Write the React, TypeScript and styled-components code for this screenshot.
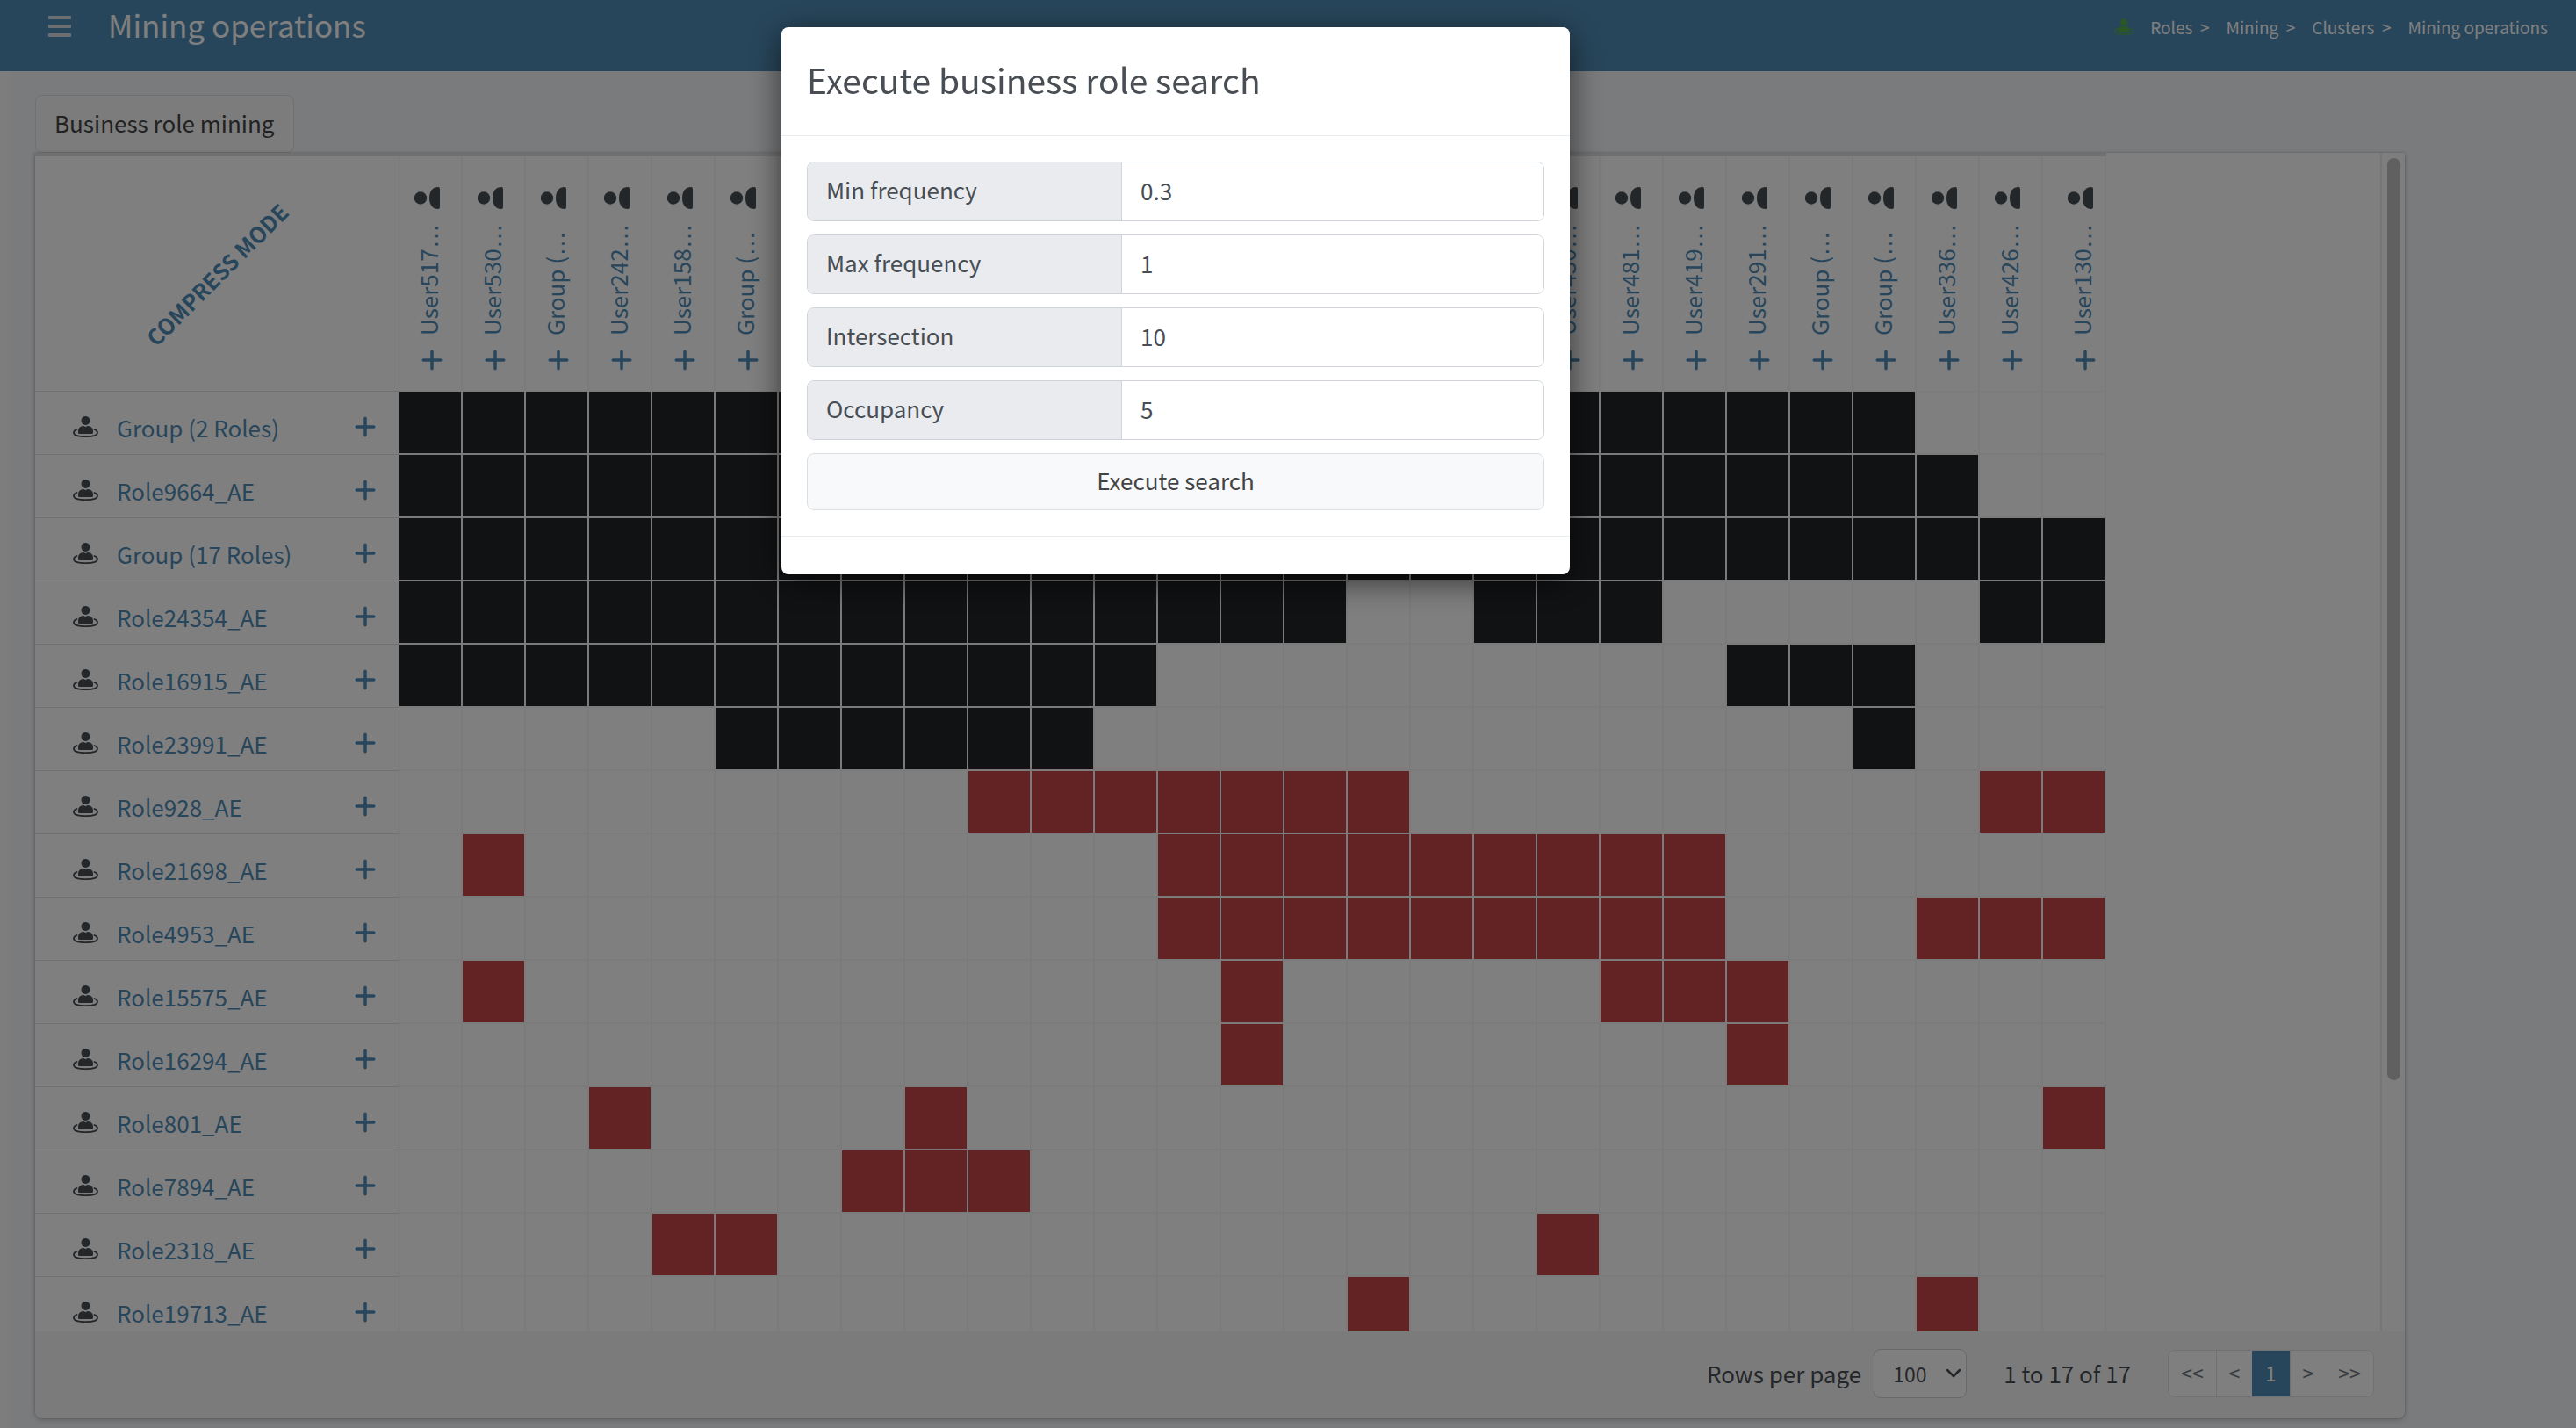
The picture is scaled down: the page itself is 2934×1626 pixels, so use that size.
import React from "react";
import styled, { createGlobalStyle } from "styled-components";

const Global = createGlobalStyle`
  * { box-sizing: border-box; }
  html, body { margin: 0; padding: 0; background: #f4f6f9; }
  body { min-height: 100vh; overflow: hidden; font-family: "Noto Sans CJK JP", "Noto Sans", sans-serif; font-size: 26px; line-height: 40px; color: #484e54; }
  button, input, select { font: inherit; color: inherit; margin: 0; }
  button { cursor: pointer; }
  a { color: inherit; text-decoration: none; }
`;

const Page = styled.div`
  min-height: 100vh;
  display: flex;
  flex-direction: column;
`;

const Header = styled.header`
  height: 81px;
  padding: 0 32px 0 55px;
  display: flex;
  align-items: flex-start;
  background: #508cb6;
  color: #fff;
`;

const MenuButton = styled.button`
  height: 60px;
  width: 26px;
  padding: 0;
  border: 0;
  background: none;
  display: flex;
  flex-direction: column;
  justify-content: center;
  gap: 6px;
`;

const MenuBar = styled.span`
  height: 4px;
  border-radius: 1px;
  background: #d8dee4;
`;

const PageTitle = styled.h1`
  margin: 0 auto 0 42px;
  font-size: 35px;
  line-height: 56px;
  font-weight: 400;
`;

const Crumbs = styled.nav`
  display: flex;
  align-items: center;
  height: 62px;
  font-size: 19px;
  gap: 19px;
`;

const Body = styled.div`
  flex: 1;
  display: flex;
`;

const Sidebar = styled.aside`
  width: 12px;
  background: #fafafa;
`;

const Main = styled.main`
  flex: 1;
  min-width: 0;
  padding: 27px 195px 10px 28px;
  display: flex;
  flex-direction: column;
  align-items: stretch;
`;

const Tab = styled.button`
  align-self: flex-start;
  height: 66px;
  padding: 0 21px 2px;
  border: 1px solid #e0e0e0;
  border-radius: 8px;
  background: #f8f9fa;
  color: #444;
`;

const Card = styled.section`
  border-radius: 0 0 8px 8px;
  background: #fff;
  box-shadow: 0 0 2px rgba(0, 0, 0, 0.25), 0 2px 6px rgba(0, 0, 0, 0.2);
  display: flex;
  flex-direction: column;
  overflow: hidden;
`;

const Viewport = styled.div`
  display: flex;
  height: 1342px;
  overflow: hidden;
`;

const TableArea = styled.div`
  flex: 1;
  min-width: 0;
  overflow: hidden;
`;

const Matrix = styled.table`
  border-collapse: separate;
  border-spacing: 0;
  table-layout: fixed;
  width: 2359px;
  border-top: 4px solid #e1e1e1;
`;

const FirstCol = styled.col`
  width: 415px;
`;

const Col = styled.col`
  width: 72px;
`;

const Corner = styled.th`
  height: 268px;
  padding: 0;
  border-bottom: 1px solid #e0e0e0;
  border-right: 1px solid #f4f4f4;
`;

const CompressButton = styled.button`
  border: 0;
  padding: 0;
  background: none;
  color: #508cb6;
  font-size: 25px;
  font-weight: 700;
  white-space: nowrap;
  transform: rotate(-45deg);
`;

const ColHead = styled.th`
  height: 268px;
  padding: 0;
  vertical-align: top;
  text-align: left;
  font-weight: 400;
  border-right: 2px solid #f6f6f6;
  border-bottom: 1px solid #f6f6f6;
`;

const ColStack = styled.div<{ $last?: boolean }>`
  height: 264px;
  padding-top: 35px;
  padding-left: ${(p) => (p.$last ? 28 : 17)}px;
  display: flex;
  flex-direction: column;
  align-items: flex-start;
`;

const ColIcon = styled.svg`
  width: 30px;
  height: 25px;
  flex: none;
`;

const ColLabel = styled.a`
  height: 144px;
  width: 32px;
  line-height: 32px;
  writing-mode: vertical-rl;
  text-orientation: sideways;
  transform: rotate(180deg);
  color: #508cb6;
  white-space: nowrap;
`;

const Dots = styled.span`
  font-family: "Liberation Sans", Arial, sans-serif;
  font-size: 29px;
`;

const PlusButton = styled.button`
  border: 0;
  padding: 0;
  background: none;
  width: 24px;
  height: 24px;
  display: flex;
`;

const ColPlus = styled(PlusButton)`
  margin: 16px 0 0 8px;
`;

const RowHead = styled.th`
  height: 72px;
  padding: 0 26px 0 43px;
  font-weight: 400;
  text-align: left;
  border-bottom: 1px solid #e0e0e0;
  border-right: 1px solid #f4f4f4;
`;

const RowInner = styled.div`
  padding-top: 9px;
  display: flex;
  align-items: center;
  gap: 21px;
`;

const RowLink = styled.a`
  flex: 1;
  padding-top: 2px;
  color: #508cb6;
`;

const Cell = styled.td<{ $fill?: string }>`
  height: 72px;
  padding: 0;
  background: ${(p) => p.$fill || "#fff"};
  background-clip: padding-box;
  border-right: 2px solid #f6f6f6;
  border-bottom: 2px solid #f6f6f6;
`;

const Track = styled.div`
  width: 28px;
  padding: 6px 5px 0 6px;
  border-left: 2px solid #ececec;
  background: #fcfcfc;
`;

const Thumb = styled.div`
  height: 1050px;
  border-radius: 8px;
  background: #c0c0c0;
`;

const CardFooter = styled.footer`
  height: 99px;
  padding: 0 35px 3px 0;
  display: flex;
  align-items: center;
  justify-content: flex-end;
  background: #f7f7f7;
`;

const SelectWrap = styled.span`
  position: relative;
  margin: 0 42px 0 14px;
  display: flex;
`;

const PageSize = styled.select`
  appearance: none;
  width: 106px;
  height: 56px;
  padding: 0 0 0 21px;
  border: 1px solid #ced4da;
  border-radius: 8px;
  background: #fff;
  font-size: 23px;
`;

const Chevron = styled.svg`
  position: absolute;
  right: 6px;
  top: 22px;
  width: 18px;
  height: 12px;
  pointer-events: none;
`;

const Pager = styled.nav`
  display: flex;
  margin-left: 42px;
  border: 1px solid #dee2e6;
  border-radius: 8px;
  overflow: hidden;
`;

const PagerButton = styled.button<{ $wide?: boolean; $active?: boolean }>`
  width: ${(p) => (p.$wide ? 54 : p.$active ? 43 : 41)}px;
  height: 52px;
  padding: 0 0 2px;
  border: 0;
  border-left: ${(p) => (p.$wide || p.$active ? 0 : 1)}px solid #dee2e6;
  background: ${(p) => (p.$active ? "#508cb6" : "#fff")};
  color: ${(p) => (p.$active ? "#fff" : "#6c757d")};
  font-size: 23px;
  & + &:last-child { border-left-width: 1px; }
`;

const Backdrop = styled.div`
  position: fixed;
  inset: 0;
  padding-top: 31px;
  display: flex;
  align-items: flex-start;
  justify-content: center;
  background: rgba(0, 0, 0, 0.5);
`;

const Dialog = styled.form`
  width: 898px;
  margin-right: 256px;
  border-radius: 8px;
  background: #fff;
  box-shadow: 0 8px 36px rgba(0, 0, 0, 0.6);
`;

const DialogHeader = styled.div`
  height: 124px;
  padding: 0 29px 6px;
  display: flex;
  align-items: center;
  border-bottom: 1px solid #e9ecef;
`;

const DialogTitle = styled.h2`
  margin: 0;
  font-size: 39px;
  line-height: 60px;
  font-weight: 400;
`;

const DialogBody = styled.div`
  padding: 29px;
  display: flex;
  flex-direction: column;
  gap: 15px;
  border-bottom: 1px solid #e9ecef;
`;

const Field = styled.div`
  display: flex;
  height: 68px;
  border: 1px solid #ced4da;
  border-radius: 8px;
  overflow: hidden;
`;

const FieldLabel = styled.label`
  width: 358px;
  padding-left: 21px;
  line-height: 62px;
  background: #e9ebef;
  border-right: 1px solid #ced4da;
`;

const FieldInput = styled.input`
  flex: 1;
  min-width: 0;
  padding: 0 21px 3px;
  border: 0;
  outline: 0;
  background: #fff;
`;

const Submit = styled.button`
  height: 65px;
  padding: 0 0 3px;
  border: 1px solid #dcdfe2;
  border-radius: 8px;
  background: #f8f9fa;
  color: #444;
`;

const DialogFooter = styled.div`
  height: 43px;
`;

const BLACK = "#222427";
const RED = "#c74448";

type Row = { name: string; fill: string; runs: [number, number][] };

const rows: Row[] = [
  { name: "Group (2 Roles)", fill: BLACK, runs: [[0, 23]] },
  { name: "Role9664_AE", fill: BLACK, runs: [[0, 24]] },
  { name: "Group (17 Roles)", fill: BLACK, runs: [[0, 26]] },
  { name: "Role24354_AE", fill: BLACK, runs: [[0, 14], [17, 19], [25, 26]] },
  { name: "Role16915_AE", fill: BLACK, runs: [[0, 11], [21, 23]] },
  { name: "Role23991_AE", fill: BLACK, runs: [[5, 10], [23, 23]] },
  { name: "Role928_AE", fill: RED, runs: [[9, 15], [25, 26]] },
  { name: "Role21698_AE", fill: RED, runs: [[1, 1], [12, 20]] },
  { name: "Role4953_AE", fill: RED, runs: [[12, 20], [24, 26]] },
  { name: "Role15575_AE", fill: RED, runs: [[1, 1], [13, 13], [19, 21]] },
  { name: "Role16294_AE", fill: RED, runs: [[13, 13], [21, 21]] },
  { name: "Role801_AE", fill: RED, runs: [[3, 3], [8, 8], [26, 26]] },
  { name: "Role7894_AE", fill: RED, runs: [[7, 9]] },
  { name: "Role2318_AE", fill: RED, runs: [[4, 5], [18, 18]] },
  { name: "Role19713_AE", fill: RED, runs: [[15, 15], [24, 24]] },
];

const columns: string[] = [
  "User517", "User530", "Group (", "User242", "User158", "Group (",
  "", "", "", "", "", "", "", "", "", "", "", "",
  "User430", "User481", "User419", "User291", "Group (", "Group (",
  "User336", "User426", "User130",
];

const fields = [
  { id: "min", label: "Min frequency", value: "0.3" },
  { id: "max", label: "Max frequency", value: "1" },
  { id: "intersection", label: "Intersection", value: "10" },
  { id: "occupancy", label: "Occupancy", value: "5" },
];

function Plus() {
  return (
    <svg width="24" height="24" viewBox="0 0 24 24" fill="none" stroke="#508cb6" strokeWidth="3.500" strokeLinecap="round">
      <path d="M12 2.200v19.600M2.200 12h19.600" />
    </svg>
  );
}

function RoleIcon({ color = "#484e54", width = 29 }: { color?: string; width?: number }) {
  return (
    <svg width={width} height={width} viewBox="0 0 29 29" fill={color}>
      <circle cx="14.5" cy="7" r="5" />
      <path d="M9.5 13.5 12 13l2.500 1L17 13l2.500.5c2.500 1 3.500 3 3.500 5.500v1.500q0 1.500-1.500 1.500h-14q-1.500 0-1.500-1.500V19c0-2.500 1-4.500 3.500-5.500z" />
      <path d="M4.500 17C2.500 17.700 1 18.700 1 20.400c0 3.200 6 4.700 13.500 4.700s13.500-1.500 13.500-4.700c0-1.700-1.500-2.700-3.500-3.400" fill="none" stroke={color} strokeWidth="1.800" strokeLinecap="round" />
    </svg>
  );
}

export default function App() {
  return (
    <>
      <Global />
      <Page>
        <Header>
          <MenuButton aria-label="Menu">
            <MenuBar />
            <MenuBar />
            <MenuBar />
          </MenuButton>
          <PageTitle>Mining operations</PageTitle>
          <Crumbs>
            <RoleIcon color="#55b04a" width={22} />
            <a href="#roles">Roles &nbsp;&gt;</a>
            <a href="#mining">Mining &nbsp;&gt;</a>
            <a href="#clusters">Clusters &nbsp;&gt;</a>
            <span>Mining operations</span>
          </Crumbs>
        </Header>
        <Body>
          <Sidebar />
          <Main>
            <Tab>Business role mining</Tab>
            <Card>
              <Viewport>
                <TableArea>
                  <Matrix>
                    <colgroup>
                      <FirstCol />
                      {columns.map((_, i) => <Col key={i} />)}
                    </colgroup>
                    <thead>
                      <tr>
                        <Corner><CompressButton>COMPRESS MODE</CompressButton></Corner>
                        {columns.map((name, i) => (
                          <ColHead key={i}>
                            {name && (
                              <ColStack $last={i === columns.length - 1}>
                                <ColIcon viewBox="0 0 30 25" fill="#484e54">
                                  <circle cx="7" cy="12.500" r="7.200" />
                                  <path d="M29 2v21q0 2-2 2C21 25 17 20.500 17 12.500S21 0 27 0q2 0 2 2z" />
                                </ColIcon>
                                <ColLabel href="#member">{name}<Dots>…</Dots></ColLabel>
                                <ColPlus aria-label="Expand column"><Plus /></ColPlus>
                              </ColStack>
                            )}
                          </ColHead>
                        ))}
                      </tr>
                    </thead>
                    <tbody>
                      {rows.map((row) => (
                        <tr key={row.name}>
                          <RowHead>
                            <RowInner>
                              <RoleIcon />
                              <RowLink href="#role">{row.name}</RowLink>
                              <PlusButton aria-label="Expand row"><Plus /></PlusButton>
                            </RowInner>
                          </RowHead>
                          {columns.map((_, c) => (
                            <Cell key={c} $fill={row.runs.some(([a, b]) => c >= a && c <= b) ? row.fill : undefined} />
                          ))}
                        </tr>
                      ))}
                    </tbody>
                  </Matrix>
                </TableArea>
                <Track><Thumb /></Track>
              </Viewport>
              <CardFooter>
                <label htmlFor="page-size">Rows per page</label>
                <SelectWrap>
                  <PageSize id="page-size" defaultValue="100"><option>100</option></PageSize>
                  <Chevron viewBox="0 0 18 12" fill="none" stroke="#484e54" strokeWidth="2.500" strokeLinecap="round" strokeLinejoin="round">
                    <path d="M2 2l7 7 7-7" />
                  </Chevron>
                </SelectWrap>
                <span>1 to 17 of 17</span>
                <Pager>
                  <PagerButton $wide>&lt;&lt;</PagerButton>
                  <PagerButton>&lt;</PagerButton>
                  <PagerButton $active>1</PagerButton>
                  <PagerButton>&gt;</PagerButton>
                  <PagerButton $wide>&gt;&gt;</PagerButton>
                </Pager>
              </CardFooter>
            </Card>
          </Main>
        </Body>
      </Page>
      <Backdrop>
        <Dialog onSubmit={(e) => e.preventDefault()}>
          <DialogHeader><DialogTitle>Execute business role search</DialogTitle></DialogHeader>
          <DialogBody>
            {fields.map((f) => (
              <Field key={f.id}>
                <FieldLabel htmlFor={f.id}>{f.label}</FieldLabel>
                <FieldInput id={f.id} defaultValue={f.value} />
              </Field>
            ))}
            <Submit type="submit">Execute search</Submit>
          </DialogBody>
          <DialogFooter />
        </Dialog>
      </Backdrop>
    </>
  );
}
